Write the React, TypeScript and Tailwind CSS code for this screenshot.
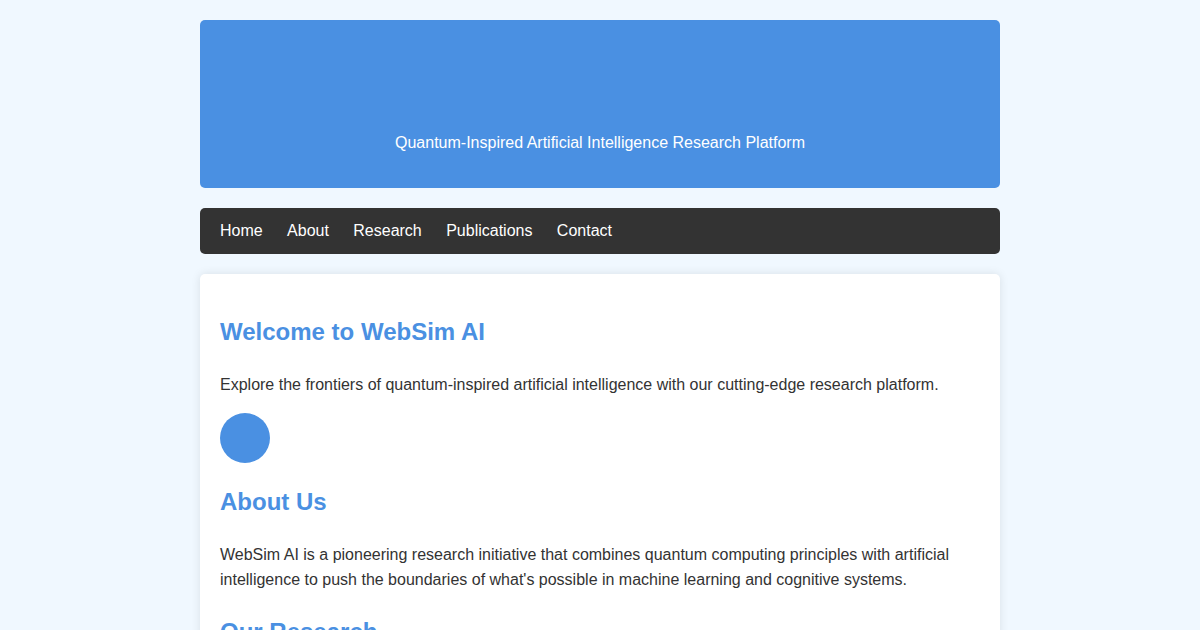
export default function App() {
  const links = ['Home', 'About', 'Research', 'Publications', 'Contact'];

  return (
    <div className="min-h-screen bg-[#f0f8ff] text-[#333] leading-[1.6] font-['Liberation_Sans',Arial,sans-serif]">
      <div className="mx-auto max-w-[800px] py-5">
        {/* Header */}
        <header className="flex h-[168px] flex-col justify-end rounded-[5px] bg-[#4a90e2] px-5 pb-[32px] text-center text-white">
          <p className="text-base leading-[1.6]">Quantum-Inspired Artificial Intelligence Research Platform</p>
        </header>

        {/* Nav */}
        <nav className="mt-5 flex gap-[24.4px] rounded-[5px] bg-[#333] px-5 py-[10px] text-base leading-[1.6] text-white">
          {links.map((l) => (
            <a key={l} href="#">
              {l}
            </a>
          ))}
        </nav>

        {/* Main content */}
        <main className="mt-5 rounded-[5px] bg-white p-5 shadow-[0_0_10px_rgba(0,0,0,0.1)]">
          <h2 className="my-[19.9px] text-2xl leading-[1.6] font-bold text-[#4a90e2]">Welcome to WebSim AI</h2>
          <p className="mb-4">
            Explore the frontiers of quantum-inspired artificial intelligence with our cutting-edge research platform.
          </p>
          <div className="h-[50px] w-[50px] rounded-full bg-[#4a90e2]"></div>
          <h2 className="my-[19.9px] text-2xl leading-[1.6] font-bold text-[#4a90e2]">About Us</h2>
          <p className="mb-4">
            WebSim AI is a pioneering research initiative that combines quantum computing principles with artificial
            intelligence to push the boundaries of what's possible in machine learning and cognitive systems.
          </p>
          <h2 className="my-[19.9px] text-2xl leading-[1.6] font-bold text-[#4a90e2]">Our Research</h2>
          <p className="mb-4">
            Our team explores quantum-inspired algorithms, neural architectures and hybrid models for the next
            generation of intelligent systems.
          </p>
        </main>
      </div>
    </div>
  );
}
